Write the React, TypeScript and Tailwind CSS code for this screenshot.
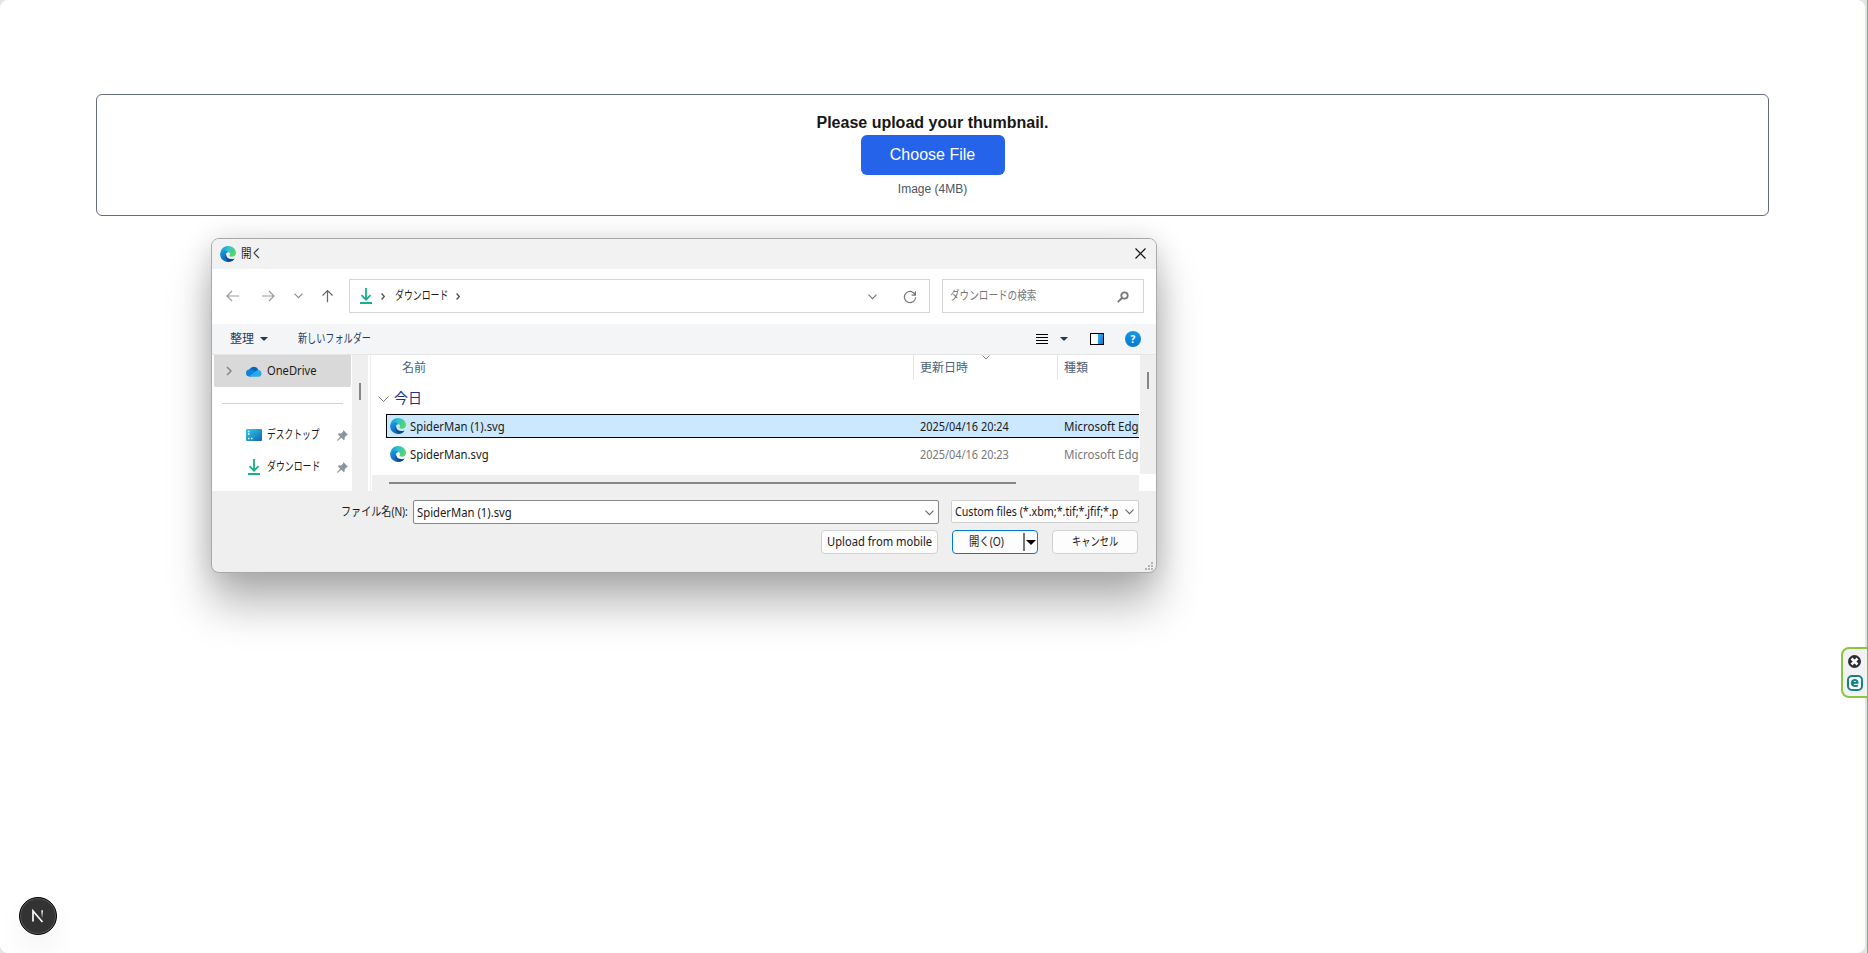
import { ReactNode } from "react";

interface FileEntry {
  name: string;
  modified: string;
  type: string;
  selected: boolean;
}

const files: FileEntry[] = [
  { name: "SpiderMan (1).svg", modified: "2025/04/16 20:24", type: "Microsoft Edge", selected: true },
  { name: "SpiderMan.svg", modified: "2025/04/16 20:23", type: "Microsoft Edge", selected: false },
];

export default function App() {
  return (
    <div className="relative h-[953px] w-[1868px] overflow-hidden border-r border-[#7fba3c] bg-[#e4e4e6] pr-[2px] font-['Liberation_Sans',sans-serif]">
      <main className="h-full rounded-lg bg-white px-24 pt-[94px]">
        <UploadBox />
      </main>
      <OpenDialog />
      <SideWidget />
      <DevBadge />
    </div>
  );
}

function UploadBox() {
  return (
    <div className="flex h-[122px] flex-col items-center rounded-md border border-[#666b7f] pt-4">
      <h1 className="text-base leading-6 font-bold text-[#171717]">Please upload your thumbnail.</h1>
      <button className="h-10 w-36 rounded-md bg-[#2563eb] text-base text-white">Choose File</button>
      <p className="mt-1 text-xs leading-5 text-[#4b5563]">Image (4MB)</p>
    </div>
  );
}

function OpenDialog() {
  return (
    <div className="absolute top-[238px] left-[211px] flex h-[335px] w-[946px] flex-col overflow-hidden rounded-lg border border-[#a9a9a9] bg-[#efefef] font-['Noto_Sans','Noto_Sans_CJK_JP',sans-serif] text-[12px] leading-4 text-[#1a1a1a] shadow-[0_32px_44px_rgba(0,0,0,0.28),0_2px_28px_rgba(0,0,0,0.15)]">
      {/* Title bar */}
      <div className="flex h-[30px] shrink-0 items-center bg-[#f2f2f2] pr-[10px] pb-px pl-2">
        <EdgeIcon />
        <Label className="ml-[5px] w-[22px]" scale="scale-x-[0.88]">開く</Label>
        <svg className="ml-auto" width="11" height="11" viewBox="0 0 11 11" stroke="#111" strokeWidth="1.2">
          <path d="M.5.5l10 10M10.500.5l-10 10" />
        </svg>
      </div>

      {/* Navigation */}
      <div className="flex h-[55px] shrink-0 items-center bg-white pr-3 pb-px pl-[14px]">
        <ArrowIcon className="text-[#9b9b9b]" />
        <ArrowIcon className="ml-[23px] rotate-180 text-[#9b9b9b]" />
        <Chevron className="ml-[19px] text-[#8a8a8a]" />
        <ArrowIcon className="ml-[18px] rotate-90 text-[#666]" />
        <div className="ml-[15px] flex h-[34px] w-[581px] items-center border border-[#d5d5d5] pl-[10px]">
          <DownloadIcon />
          <Crumb className="ml-[9px]" />
          <Label className="ml-[10px] w-[53px]" scale="scale-x-[0.74]">ダウンロード</Label>
          <Crumb className="ml-[8px]" />
          <Chevron className="mt-px ml-auto text-[#777]" />
          <svg className="mt-px mr-[12px] ml-[26px]" width="14" height="14" viewBox="0 0 14 14" fill="none" stroke="#777" strokeWidth="1.2">
            <path d="M12.300 5.200A5.600 5.600 0 1 0 12.600 7.300M12.400 1.300v3.900H8.600" />
          </svg>
        </div>
        <div className="ml-3 flex h-[34px] w-[202px] items-center border border-[#d5d5d5] pl-[7px] text-[#757575]">
          <Label className="w-[87px]" scale="scale-x-[0.8]">ダウンロードの検索</Label>
          <svg className="mt-px mr-[14px] ml-auto" width="12" height="12" viewBox="0 0 12 12" fill="none" stroke="#777" strokeWidth="1.8">
            <circle cx="7.500" cy="4.500" r="3.200" />
            <path d="M5 7L.8 11.200" />
          </svg>
        </div>
      </div>

      {/* Toolbar */}
      <div className="flex h-[31px] shrink-0 items-center border-b border-[#e5e5e7] bg-[#f4f5f7] pl-[18px] text-[#1e3a5f]">
        <Label className="w-[24px]" scale="scale-x-100">整理</Label>
        <Caret className="ml-[6px] text-[#1e395b]" />
        <Label className="ml-[30px] w-[73px]" scale="scale-x-[0.76]">新しいフォルダー</Label>
        <svg className="ml-auto" width="12" height="11" viewBox="0 0 12 11" stroke="#000" strokeWidth="1">
          <path d="M0 .5h12M0 3.500h12M0 6.500h12M0 9.500h12" />
        </svg>
        <Caret className="ml-[12px] text-[#1e395b]" />
        <div className="ml-[22px] flex h-3 w-[14px] justify-end border border-black bg-white">
          <div className="w-[5px] bg-gradient-to-br from-[#35b1f0] to-[#0b7ad1]" />
        </div>
        <div className="mr-[15px] ml-[21px] flex size-4 items-center justify-center rounded-full bg-gradient-to-b from-[#1697e6] to-[#0a78cf] text-[10px] font-bold text-white">
          ?
        </div>
      </div>

      <div className="flex h-[136px] shrink-0 bg-white">
        <Sidebar />
        <div className="w-[16px] shrink-0 bg-[#efefef] pt-[28px] pl-[7px]">
          <div className="h-[17px] w-[2px] bg-[#868686]" />
        </div>
        <div className="mr-[1px] ml-[2px] w-px bg-[#f0f0f0]" />
        <FileList />
      </div>

      <DialogFooter />
    </div>
  );
}

function Sidebar() {
  return (
    <div className="w-[140px] shrink-0 pl-[2px]">
      <div className="flex h-8 w-[137px] items-center rounded-b-[2px] bg-[#d9d9d9] pl-[12px]">
        <svg width="6" height="10" viewBox="0 0 6 10" fill="none" stroke="#858585" strokeWidth="1.5">
          <path d="M1 1l4 4-4 4" />
        </svg>
        <svg className="ml-[14px]" width="16" height="11" viewBox="0 0 16 11">
          <path d="M4 10.500A4 4 0 0 1 3.500 3.300 5 5 0 0 1 12.300 3.500L9 8z" fill="#0364b8" />
          <path d="M3.500 3.500c3-.8 5 1.500 9 4L5 10.500H3.500A3.500 3.500 0 0 1 3.500 3.500z" fill="#1080d8" />
          <path d="M3 10.200L11.500 4a3.300 3.300 0 0 1 1 6.800H4z" fill="#28a8ea" />
        </svg>
        <Label className="ml-[5px] w-[50px]" scale="scale-x-[0.93]">OneDrive</Label>
      </div>
      <div className="mt-[16px] mb-[15px] ml-2 h-px w-[121px] bg-[#d3d3d3]" />
      <div className="flex h-8 items-center pl-8">
        <svg width="16" height="12" viewBox="0 0 16 12">
          <defs>
            <linearGradient id="desktop" x1="0" y1="0" x2="1" y2="1">
              <stop offset="0" stopColor="#37cbe4" />
              <stop offset="1" stopColor="#0b66b5" />
            </linearGradient>
          </defs>
          <rect width="16" height="12" rx="1" fill="url(#desktop)" />
          <path d="M2 2.500h1.500M2 5h1.500M2 9.500h1.500M5 9.500h1.500" stroke="#fff" strokeWidth="1.300" />
        </svg>
        <Label className="ml-[5px] w-[53px]" scale="scale-x-[0.73]">デスクトップ</Label>
        <PinIcon />
      </div>
      <div className="flex h-8 items-center pl-[34px]">
        <DownloadIcon />
        <Label className="ml-[7px] w-[53px]" scale="scale-x-[0.74]">ダウンロード</Label>
        <PinIcon />
      </div>
    </div>
  );
}

function FileList() {
  return (
    <div className="flex min-w-0 flex-1">
      <div className="flex w-[767px] shrink-0 flex-col overflow-hidden">
        <div className="flex h-[25px] shrink-0 items-center text-[#4c607a]">
          <span className="w-[541px] pl-[30px]">名前</span>
          <div className="relative flex h-full w-[144px] items-center border-l border-[#e5e5e5] pl-[6px]">
            更新日時
            <svg className="absolute top-0 left-[68px]" width="8" height="5" viewBox="0 0 8 5" fill="none" stroke="#888">
              <path d="M.5.5L4 4 7.500.5" />
            </svg>
          </div>
          <span className="flex h-full flex-1 items-center border-l border-[#e5e5e5] pl-[6px]">種類</span>
        </div>
        <div className="flex h-[34px] shrink-0 items-center pt-[4px] pl-[6px] text-[14px] text-[#1e3287]">
          <svg width="11" height="7" viewBox="0 0 11 7" fill="none" stroke="#777">
            <path d="M.5.5l5 5 5-5" />
          </svg>
          <span className="mb-[2px] ml-[5px]">今日</span>
        </div>
        {files.map((file) => (
          <div
            key={file.name}
            className={`mb-1 ml-[14px] flex h-6 w-[800px] shrink-0 items-center border pl-[3px] ${
              file.selected ? "border-black bg-[#cce8ff]" : "border-transparent text-[#777]"
            }`}
          >
            <EdgeIcon />
            <Label className="mt-[2px] ml-[4px] w-[510px] text-[#1a1a1a]" scale="scale-x-[0.94]">{file.name}</Label>
            <Label className="mt-[2px] w-[144px]" scale="scale-x-[0.91]">{file.modified}</Label>
            <Label className="mt-[2px] w-[90px]" scale="scale-x-[0.96]">{file.type}</Label>
          </div>
        ))}
        <div className="mt-[5px] h-4 shrink-0 bg-[#efefef] pt-[7px] pl-[17px]">
          <div className="h-[2px] w-[627px] bg-[#868686]" />
        </div>
      </div>
      <div className="ml-px h-[119px] flex-1 bg-[#efefef] pt-[17px] pl-[7px]">
        <div className="h-[17px] w-[2px] bg-[#868686]" />
      </div>
    </div>
  );
}

function DialogFooter() {
  return (
    <div className="relative flex-1 pt-[9px]">
      <div className="flex items-start pl-[129px]">
        <Label className="mt-[4px] w-[72px]" scale="scale-x-[0.84]">ファイル名(N):</Label>
        <div className="flex h-6 w-[526px] items-center rounded-[2px] border border-[#868686] bg-white pr-[4px] pl-[3px]">
          <Label className="mt-[2px]" scale="scale-x-[0.94]">SpiderMan (1).svg</Label>
          <Chevron className="mt-px ml-auto text-[#666]" />
        </div>
        <div className="ml-3 flex h-[23px] w-[188px] items-center rounded-[2px] border border-[#cfcfcf] bg-[#fdfdfd] pr-[4px] pl-[3px]">
          <Label className="w-[165px]" scale="scale-x-[0.89]">Custom files (*.xbm;*.tif;*.jfif;*.p</Label>
          <Chevron className="ml-auto text-[#666]" />
        </div>
      </div>
      <div className="mt-[6px] flex pl-[609px]">
        <button className="flex h-6 w-[117px] items-center rounded-[4px] border border-[#d0d0d0] bg-[#fdfdfd] pl-[5px] text-left">
          <Label scale="scale-x-[0.93]">Upload from mobile</Label>
        </button>
        <button className="ml-[14px] flex h-6 w-[86px] items-center rounded-[4px] border border-[#0078d4] bg-[#fdfdfd] pl-[16px] text-left">
          <Label className="w-[54px]" scale="scale-x-[0.86]">開く(O)</Label>
          <span className="h-[18px] w-[2px] bg-[#777]" />
          <svg className="ml-px" width="10" height="5" viewBox="0 0 10 5">
            <path d="M0 0h10L5 5z" />
          </svg>
        </button>
        <button className="ml-[14px] flex h-6 w-[86px] items-center rounded-[4px] border border-[#d0d0d0] bg-[#fdfdfd] pl-[19px] text-left">
          <Label scale="scale-x-[0.77]">キャンセル</Label>
        </button>
      </div>
      <svg className="absolute right-[3px] bottom-[2px]" width="8" height="8" viewBox="0 0 8 8" fill="#b5b5b5">
        <path d="M6 0h2v2H6zM3 3h2v2H3zM6 3h2v2H6zM0 6h2v2H0zM3 6h2v2H3zM6 6h2v2H6z" />
      </svg>
    </div>
  );
}

function SideWidget() {
  return (
    <div className="absolute top-[647px] -right-px flex h-[51px] w-[27px] flex-col items-center rounded-l-lg border-2 border-r border-[#8cc63f] bg-[#f2f2f4] pt-[6px] pr-px">
      <svg width="13" height="13" viewBox="0 0 13 13">
        <circle cx="6.500" cy="6.500" r="6.500" fill="#2c2c36" />
        <path d="M3.500 3.500l6 6M9.500 3.500l-6 6" stroke="#fff" strokeWidth="2.500" />
      </svg>
      <div className="mt-[7px] flex size-4 items-center justify-center rounded-[5px] border-2 border-[#13808a] bg-white pb-[3px] font-['Open_Sans',sans-serif] text-[14px] leading-none font-extrabold text-[#13808a]">
        e
      </div>
    </div>
  );
}

function DevBadge() {
  return (
    <div className="absolute top-[897px] left-[19px] flex size-[38px] items-center justify-center rounded-full border border-black bg-[#333] shadow-[inset_0_0_0_1px_#5a5a5a,0_16px_32px_-8px_rgba(0,0,0,0.15)]">
      <svg width="14" height="14" viewBox="0 0 14 14" fill="none" strokeWidth="1.700">
        <defs>
          <linearGradient id="badge-stem" x1="0" y1="0" x2="0" y2="1">
            <stop offset="0" stopColor="#fff" />
            <stop offset="1" stopColor="#fff" stopOpacity="0" />
          </linearGradient>
        </defs>
        <path d="M2 12.500V2l9.500 11" stroke="#fff" />
        <rect x="10.300" y="1.300" width="1.700" height="8" fill="url(#badge-stem)" />
      </svg>
    </div>
  );
}

// Text squeezed horizontally, like the narrow kana of the system UI font
function Label({ children, className = "", scale }: { children: ReactNode; className?: string; scale: string }) {
  return (
    <span className={`block whitespace-nowrap ${className}`}>
      <span className={`inline-block origin-left ${scale}`}>{children}</span>
    </span>
  );
}

function EdgeIcon() {
  return (
    <svg className="shrink-0" width="16" height="16" viewBox="0 0 16 16">
      <defs>
        <linearGradient id="edge-top" x1="0" y1="0.300" x2="1" y2="0.600">
          <stop offset="0" stopColor="#1593d8" />
          <stop offset="0.450" stopColor="#2cc3d2" />
          <stop offset="1" stopColor="#5fdc4c" />
        </linearGradient>
        <linearGradient id="edge-body" x1="0" y1="0" x2="0.600" y2="1">
          <stop offset="0" stopColor="#1a9be6" />
          <stop offset="1" stopColor="#0c5cb0" />
        </linearGradient>
      </defs>
      <path d="M.2 7A8 8 0 0 1 8 0c4.600 0 8 3.200 8 6.800 0 2.400-1.800 4-4 4-1.800 0-2.700-.7-2.600-1.200.9-.8.7-2.300-.4-3.300C6.500 4.200 2 4.500.2 7z" fill="url(#edge-top)" />
      <path d="M.1 7.600C1.200 4.300 6.200 3.600 8.700 6.200 6.800 6 5.400 7.600 5.700 9.700c.4 3.300 3.700 5 8.100 3.800A8 8 0 0 1 .1 7.600z" fill="url(#edge-body)" />
      <path d="M6 7.600c-1.800 3 0 6.600 3.700 8.200 2.200-.4 4-1.500 5-3.300-3.700 1.300-7.800.2-8.300-2.800z" fill="#114a8b" />
    </svg>
  );
}

function DownloadIcon() {
  return (
    <svg className="shrink-0" width="12" height="16" viewBox="0 0 12 16" fill="none" stroke="#18b08c" strokeWidth="1.800">
      <path d="M6 0v11.500M1.500 7.200L6 11.700l4.500-4.500M0 15h12" />
    </svg>
  );
}

function PinIcon() {
  return (
    <svg className="ml-[17px] shrink-0" width="11" height="11" viewBox="0 0 11 11" fill="#8b959e">
      <path d="M6.300 0L11 4.700l-1.300.5-2 2 .1 2.200L6.500 10 4.300 7.800.8 10.800 0 10.200l3.200-3.500L1 4.500l.8-1.200 2.300.1 2-2z" />
    </svg>
  );
}

function ArrowIcon({ className }: { className: string }) {
  return (
    <svg className={`shrink-0 ${className}`} width="13" height="12" viewBox="0 0 13 12" fill="none" stroke="currentColor" strokeWidth="1.200">
      <path d="M13 6H1M6 1L1 6l5 5" />
    </svg>
  );
}

function Chevron({ className }: { className: string }) {
  return (
    <svg className={`shrink-0 ${className}`} width="9" height="6" viewBox="0 0 9 6" fill="none" stroke="currentColor" strokeWidth="1.100">
      <path d="M.5.7l4 4 4-4" />
    </svg>
  );
}

function Crumb({ className }: { className: string }) {
  return (
    <svg className={`shrink-0 ${className}`} width="4" height="7" viewBox="0 0 4 7" fill="none" stroke="#555" strokeWidth="1.400">
      <path d="M.6.6l2.700 2.900L.6 6.400" />
    </svg>
  );
}

function Caret({ className }: { className: string }) {
  return (
    <svg className={`shrink-0 ${className}`} width="8" height="4" viewBox="0 0 8 4" fill="currentColor">
      <path d="M0 0h8L4 4z" />
    </svg>
  );
}
